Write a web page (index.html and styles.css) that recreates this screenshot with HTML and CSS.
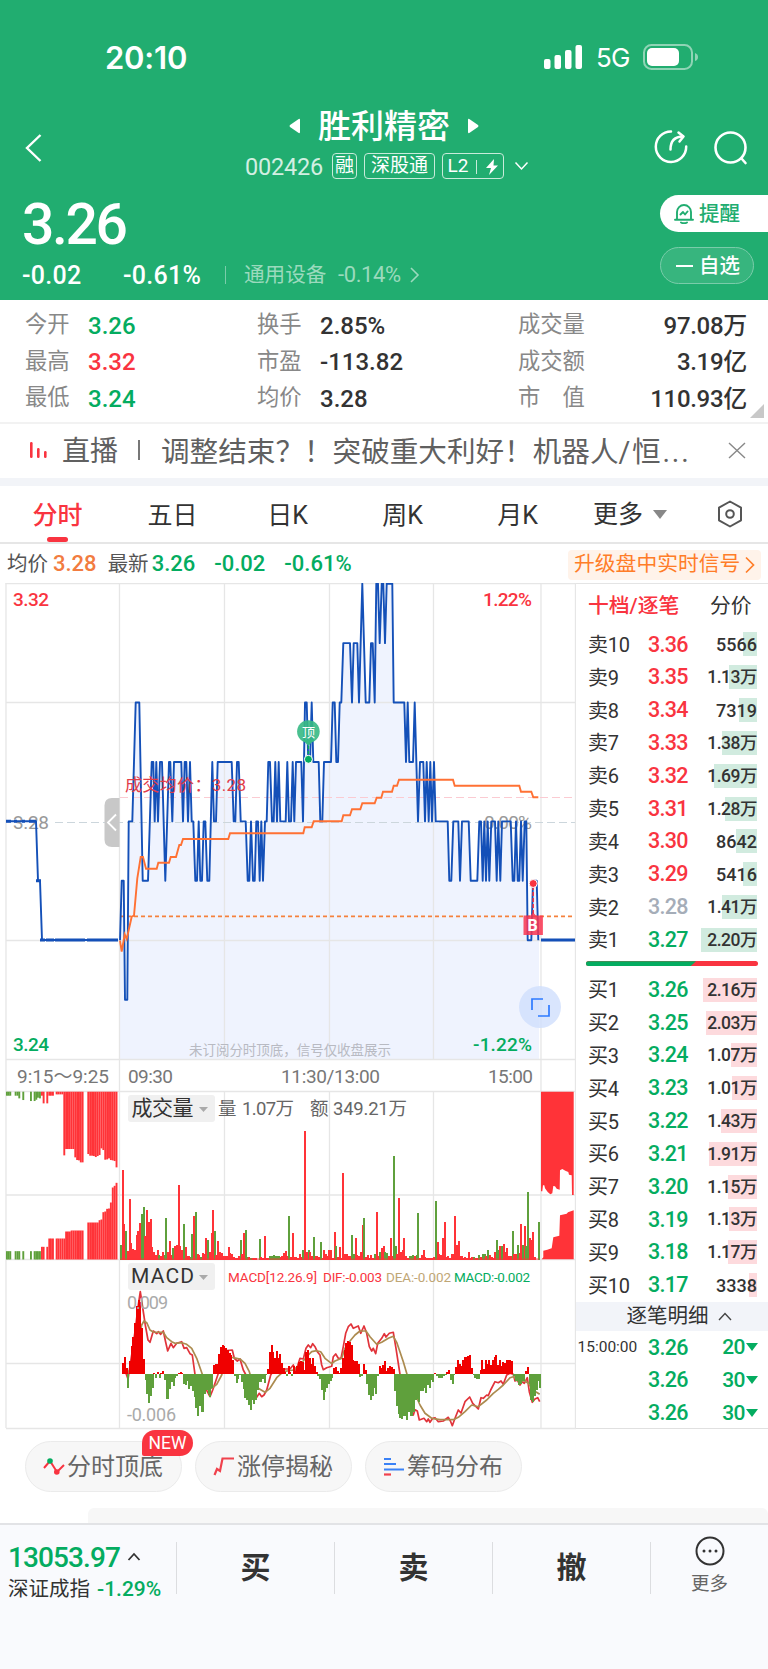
FILE: index.html
```html
<!DOCTYPE html>
<html lang="zh-CN">
  <head>
    <meta charset="UTF-8" />
    <meta name="viewport" content="width=device-width, initial-scale=1.0" />
    <title>胜利精密 002426</title>
    <link rel="stylesheet" href="styles.css" />
  </head>
  <body>
    <!-- 顶部绿色区域 -->
    <header class="header">
      <div class="status-bar">
        <span class="clock">20:10</span>
        <svg class="signal" width="39" height="26" viewBox="0 0 39 26" fill="#fff">
          <rect x="0" y="15" width="6.5" height="10" rx="2" />
          <rect x="10.5" y="11" width="6.5" height="14" rx="2" />
          <rect x="21" y="6" width="6.5" height="19" rx="2" />
          <rect x="31.5" y="1" width="6.5" height="24" rx="2" />
        </svg>
        <span class="network">5G</span>
        <svg class="battery" width="55" height="26" viewBox="0 0 55 26">
          <rect x="1" y="1" width="48" height="24" rx="7.5" fill="none" stroke="#8fd4b5" stroke-width="2" />
          <rect x="4" y="4" width="32" height="18" rx="5" fill="#fff" />
          <path d="M52 9q3 1 3 4t-3 4z" fill="#8fd4b5" />
        </svg>
      </div>

      <div class="nav">
        <svg class="back" width="18" height="28" viewBox="0 0 18 28" fill="none" stroke="#fff" stroke-width="2.4">
          <path d="M15.500 1L2 14l13.500 13" />
        </svg>
        <div class="stock">
          <div class="stock-name">
            <svg width="12" height="16" viewBox="0 0 12 16" fill="#fff"><path d="M11 2v12q0 2-2 .5L1 9q-1-1 0-2L9 1.500Q11 0 11 2z" /></svg>
            <h1>胜利精密</h1>
            <svg width="12" height="16" viewBox="0 0 12 16" fill="#fff"><path d="M1 2v12q0 2 2 .5L11 9q1-1 0-2L3 1.500Q1 0 1 2z" /></svg>
          </div>
          <div class="stock-sub">
            <span class="code">002426</span>
            <span class="tag tag-rong">融</span>
            <span class="tag tag-sgt">深股通</span>
            <span class="tag tag-l2">L2<i></i>
              <svg width="12" height="16" viewBox="0 0 12 16" fill="#fff"><path d="M8 0L0 9h5l-2 7 9-9.500H7.500z" /></svg>
            </span>
            <svg class="sub-arrow" width="15" height="10" viewBox="0 0 15 10" fill="none" stroke="#fff" stroke-width="1.500"><path d="M1.500 1.500l6 6.500 6-6.500" /></svg>
          </div>
        </div>
        <svg class="share" width="36" height="36" viewBox="0 0 36 36" fill="none" stroke="#fff" stroke-width="2.500" stroke-linecap="round" stroke-linejoin="round">
          <path d="M18 2.500A15.200 15.200 0 1 0 33.200 17.500" />
          <path d="M17.500 20.500c0-9 4-13 12.500-13" />
          <path d="M25.500 3.500l5 4-4 5" />
        </svg>
        <svg class="search" width="36" height="36" viewBox="0 0 36 36" fill="none" stroke="#fff" stroke-width="2.600" stroke-linecap="round">
          <circle cx="17.500" cy="17.500" r="15" />
          <path d="M28.500 28.500l4 4.500" />
        </svg>
      </div>

      <div class="quote">
        <div class="quote-left">
          <div class="price">3.26</div>
          <div class="change">
            <span class="chg">-0.02</span>
            <span class="pct">-0.61%</span>
            <i></i>
            <span class="industry">通用设备</span>
            <span class="industry-pct">-0.14%</span>
            <svg width="10" height="16" viewBox="0 0 10 16" fill="none" stroke="#9bdabd" stroke-width="1.600"><path d="M1 1l7 7-7 7" /></svg>
          </div>
        </div>
        <div class="quote-right">
          <div class="remind">
            <svg width="20" height="21" viewBox="0 0 20 21" fill="none" stroke="#21ad70" stroke-width="1.900" stroke-linejoin="round" stroke-linecap="round">
              <path d="M3 16.500V9a7 7 0 0 1 14 0v7.500M1 16.800h18M7 19.500q3 1.500 6 0M6.500 11.500l2.500-2.500 2 2.500 2.500-3" />
            </svg>
            <span>提醒</span>
          </div>
          <div class="favor"><i></i><span>自选</span></div>
        </div>
      </div>
    </header>

    <!-- 行情数据 -->
    <section class="stats">
      <div class="stat"><label>今开</label><b class="green">3.26</b></div>
      <div class="stat"><label>换手</label><b>2.85%</b></div>
      <div class="stat wide"><label>成交量</label><b>97.08万</b></div>
      <div class="stat"><label>最高</label><b class="red">3.32</b></div>
      <div class="stat"><label>市盈</label><b>-113.82</b></div>
      <div class="stat wide"><label>成交额</label><b>3.19亿</b></div>
      <div class="stat"><label>最低</label><b class="green">3.24</b></div>
      <div class="stat"><label>均价</label><b>3.28</b></div>
      <div class="stat wide"><label>市　值</label><b>110.93亿</b></div>
      <span class="corner"></span>
    </section>

    <!-- 直播 -->
    <section class="live">
      <svg width="20" height="18" viewBox="0 0 20 18" fill="#f93440">
        <rect x="1" y="1" width="2.600" height="16" rx="1.200" />
        <rect x="8" y="7" width="2.600" height="10" rx="1.200" />
        <rect x="15" y="10" width="2.600" height="7" rx="1.200" />
      </svg>
      <span class="live-label">直播</span>
      <i></i>
      <span class="live-title">调整结束？！突破重大利好！机器人<span>/恒...</span></span>
      <svg width="18" height="17" viewBox="0 0 18 17" fill="none" stroke="#888" stroke-width="1.400"><path d="M1 1l16 15M17 1L1 16" /></svg>
    </section>

    <!-- 周期切换 -->
    <nav class="tabs">
      <span class="tab active">分时</span>
      <span class="tab">五日</span>
      <span class="tab">日K</span>
      <span class="tab">周K</span>
      <span class="tab">月K</span>
      <span class="tab more">更多<i></i></span>
      <svg width="28" height="28" viewBox="0 0 28 28" fill="none" stroke="#555" stroke-width="2" stroke-linejoin="round">
        <path d="M14 1.500l11 6.200v12.600L14 26.500 3 20.300V7.700z" />
        <circle cx="14" cy="14" r="3.800" />
      </svg>
    </nav>

    <div class="info">
      <span class="info-label">均价</span><b class="orange">3.28</b>
      <span class="info-label second">最新</span><b class="green">3.26</b>
      <b class="green gap">-0.02</b><b class="green gap">-0.61%</b>
      <a class="upgrade">升级盘中实时信号
        <svg width="10" height="18" viewBox="0 0 10 18" fill="none" stroke="#ff7d28" stroke-width="1.700"><path d="M1 1.500L8.500 9 1 16.500" /></svg>
      </a>
    </div>

    <main class="board">
      <!-- 分时图、成交量、MACD -->
      <svg class="chart" width="576" height="847" viewBox="0 583 576 847">
        <g id="area"></g>
        <g class="grid">
          <path d="M5.500 583.500H576M6 702.500H575M6 940.500H575M6 1059.500H575M6 1091.500H575M6 1195H575M6 1259.500H575M6 1363.500H575M6 1428.500H576" />
          <path d="M6 583V1428M119.500 583V1428M224.500 583V1059M224.500 1091V1428M329.500 583V1059M329.500 1091V1428M433.500 583V1059M433.500 1091V1428M541 583V1428M575.500 583V1428" />
        </g>
        <path class="dash-gray" d="M55 822.500H575" />
        <path class="dash-pink" d="M120 797.500H575" />
        <path class="dash-orange" d="M120 916.300H575" />
        <text class="axis gray" x="13" y="829" textLength="36">3.28</text>
        <text class="axis gray" x="484" y="829" textLength="48">0.00%</text>
        <g id="lines"></g>
        <text class="avg-note" x="125" y="791" textLength="121">成交均价：3.28</text>
        <text class="axis red" x="13" y="606" textLength="36">3.32</text>
        <text class="axis red" x="483" y="606" textLength="49">1.22%</text>
        <text class="axis green" x="13" y="1051" textLength="36">3.24</text>
        <text class="axis green" x="473" y="1051" textLength="59">-1.22%</text>
        <text class="hint" x="189" y="1055" textLength="202">未订阅分时顶底，信号仅收盘展示</text>

        <!-- 左侧收起按钮 -->
        <path d="M119.500 798H112q-7.500 0-7.500 7.500v34q0 7.500 7.500 7.500h7.500z" fill="#c8c8c8" />
        <path d="M116 814.500l-8 8 8 8" fill="none" stroke="#fff" stroke-width="1.800" />

        <!-- 顶 -->
        <path d="M308.400 741v14" stroke="#04ac60" stroke-width="1.500" stroke-dasharray="3 2" />
        <path d="M303 740l5.400 6 5.400-6z" fill="#36b984" />
        <circle cx="308.400" cy="731.500" r="11.300" fill="#36b984" fill-opacity="0.900" />
        <text class="top-mark" x="302" y="737">顶</text>
        <circle cx="308.400" cy="759.300" r="4" fill="#04ac60" stroke="#fff" />

        <!-- 买点 -->
        <path d="M533.200 886v30" stroke="#f93440" stroke-width="1.500" stroke-dasharray="4 2" />
        <circle cx="533.200" cy="883.500" r="4" fill="#f93440" stroke="#fff" />
        <path d="M523.500 915.500h7l2.700-3 2.700 3h7V935h-19.400z" fill="#f93450" fill-opacity="0.850" />
        <text class="buy-mark" x="527.500" y="931">B</text>

        <!-- 全屏 -->
        <circle cx="540" cy="1007" r="21" fill="#cfdefd" fill-opacity="0.800" />
        <path d="M532 1010v-11h11M538 1016h11v-11" fill="none" stroke="#2e7bff" stroke-width="1.700" />

        <text class="time" x="17" y="1083" textLength="92">9:15～9:25</text>
        <text class="time" x="128" y="1083" textLength="45">09:30</text>
        <text class="time" x="281" y="1083" textLength="99">11:30/13:00</text>
        <text class="time" x="488" y="1083" textLength="45">15:00</text>

        <g id="volume"></g>
        <rect x="128" y="1095" width="87" height="27" rx="3" fill="#f0f0f0" />
        <text class="picker" x="131.500" y="1115" textLength="62">成交量</text>
        <path d="M199 1107h9l-4.500 5z" fill="#aaa" />
        <text class="vol-text" x="218" y="1115">量</text>
        <text class="vol-text" x="242" y="1115" textLength="52">1.07万</text>
        <text class="vol-text" x="310" y="1115">额</text>
        <text class="vol-text" x="333" y="1115" textLength="74">349.21万</text>

        <g id="macd"></g>
        <text class="scale" x="127" y="1309" textLength="41">0.009</text>
        <text class="scale" x="127" y="1421" textLength="49">-0.006</text>
        <rect x="128" y="1263" width="87" height="27" rx="3" fill="#f0f0f0" />
        <text class="picker" x="131" y="1283" textLength="63">MACD</text>
        <path d="M199 1275h9l-4.500 5z" fill="#aaa" />
        <text class="macd-text red" x="228" y="1281.500" textLength="89">MACD[12.26.9]</text>
        <text class="macd-text red" x="323" y="1281.500" textLength="59">DIF:-0.003</text>
        <text class="macd-text tan" x="386" y="1281.500" textLength="65">DEA:-0.002</text>
        <text class="macd-text green" x="454" y="1281.500" textLength="76">MACD:-0.002</text>
      </svg>

      <!-- 盘口 -->
      <aside class="depth">
        <div class="depth-head"><b>十档/逐笔</b><span>分价</span></div>
        <div id="asks"></div>
        <div class="ratio"><i></i></div>
        <div id="bids"></div>
        <div class="ticks-head">逐笔明细
          <svg width="14" height="9" viewBox="0 0 14 9" fill="none" stroke="#444" stroke-width="1.400"><path d="M1 8l6-6.500L13 8" /></svg>
        </div>
        <div class="row"><span class="tick-time">15:00:00</span><b class="green">3.26</b><span class="tick-num">20<i></i></span></div>
        <div class="row"><span class="tick-time"></span><b class="green">3.26</b><span class="tick-num">30<i></i></span></div>
        <div class="row"><span class="tick-time"></span><b class="green">3.26</b><span class="tick-num">30<i></i></span></div>
      </aside>
    </main>

    <section class="tools">
      <div class="tool">
        <svg width="22" height="19" viewBox="0 0 22 19" fill="none" stroke="#f93440" stroke-width="2">
          <path d="M1 11l6-7 7 11 7-7" />
          <circle cx="7" cy="4" r="2.800" fill="#04ac60" stroke="none" />
          <circle cx="13.800" cy="15" r="2.800" fill="#f93440" stroke="none" />
        </svg>
        <span>分时顶底</span>
        <em>NEW</em>
      </div>
      <div class="tool">
        <svg width="22" height="19" viewBox="0 0 22 19" fill="none" stroke="#f0424d" stroke-width="2.200">
          <path d="M1.500 18l2.500-6 3 2 2.500-12.500H21" />
        </svg>
        <span>涨停揭秘</span>
      </div>
      <div class="tool">
        <svg width="22" height="19" viewBox="0 0 22 19">
          <path d="M1 2h7M1 7h12M1 12.500h20" stroke="#3b82f6" stroke-width="2.200" />
          <path d="M1 17.500h7" stroke="#f0424d" stroke-width="2.200" />
        </svg>
        <span>筹码分布</span>
      </div>
    </section>
    <div class="sheet"></div>

    <footer class="footer">
      <div class="index">
        <div class="index-value">13053.97
          <svg width="14" height="9" viewBox="0 0 14 9" fill="none" stroke="#333" stroke-width="1.800"><path d="M1.500 8L7 2l5.500 6" /></svg>
        </div>
        <div class="index-name">深证成指 <span>-1.29%</span></div>
      </div>
      <div class="action">买</div>
      <div class="action">卖</div>
      <div class="action">撤</div>
      <div class="footer-more">
        <svg width="30" height="30" viewBox="0 0 30 30">
          <circle cx="15" cy="15" r="13.500" fill="none" stroke="#333" stroke-width="2" />
          <g fill="#333"><circle cx="9" cy="15" r="1.500" /><circle cx="15" cy="15" r="1.500" /><circle cx="21" cy="15" r="1.500" /></g>
        </svg>
        更多
      </div>
    </footer>

    <script src="script.js"></script>
  </body>
</html>
```
FILE: styles.css
```css
* {
  box-sizing: border-box;
}

body {
  margin: 0;
  width: 768px;
  height: 1669px;
  overflow: hidden;
  background: #fff;
  color: #333;
  font-family: Roboto, "Noto Sans CJK SC", sans-serif;
  line-height: 1.2;
}

b {
  font-weight: 500;
}

i,
em {
  font-style: normal;
}

svg {
  display: block;
  flex: none;
}

.green {
  color: #04ac60;
  fill: #04ac60;
}

.red {
  color: #f93440;
  fill: #f93440;
}

.orange {
  color: #f27c40;
}

.flat {
  color: #a5adb8;
}

/* 顶部 */
.header {
  height: 300px;
  background: #21ad70;
  color: #fff;
}

.status-bar {
  display: flex;
  align-items: center;
  height: 104px;
  padding: 10px 70px 0 105px;
}

.clock {
  flex: 1;
  font: 600 31px Inter, sans-serif;
  letter-spacing: -0.2px;
}

.network {
  width: 47px;
  padding-left: 13px;
  font: 400 26px Inter, sans-serif;
  letter-spacing: -0.8px;
}

.battery {
  margin-left: 13px;
}

.nav {
  display: flex;
  align-items: flex-start;
  height: 80px;
  padding: 0 19px 0 25px;
}

.back {
  margin-top: 30px;
}

.stock {
  width: 300px;
  margin: 4px 108px 0 202px;
}

.stock-name {
  display: flex;
  align-items: center;
  height: 36px;
  padding-left: 44px;
}

.stock-name h1 {
  width: 132px;
  margin: 1px 17px 0;
  font-size: 33px;
  font-weight: 500;
  line-height: 36px;
  white-space: nowrap;
}

.stock-sub {
  display: flex;
  align-items: center;
  height: 26px;
  margin-top: 9px;
}

.code {
  width: 87px;
  padding-top: 2px;
  color: #d3efe2;
  font-size: 23.500px;
  letter-spacing: -0.2px;
}

.tag {
  display: flex;
  align-items: center;
  justify-content: center;
  height: 26px;
  margin-right: 7px;
  padding-top: 1px;
  border: 1px solid #c8ebda;
  border-radius: 4px;
  font-size: 19px;
}

.tag-rong {
  width: 25px;
}

.tag-sgt {
  width: 71px;
}

.tag-l2 {
  width: 62px;
}

.tag-l2 i {
  width: 1px;
  height: 14px;
  margin: 0 9px 0 8px;
  background: #c8ebda;
}

.sub-arrow {
  margin-left: 3px;
}

.share {
  margin: 25px 24px 0 0;
}

.search {
  margin-top: 26px;
}

.quote {
  display: flex;
  justify-content: space-between;
  height: 116px;
}

.quote-left {
  padding: 9px 0 0 22px;
}

.price {
  height: 63px;
  font-size: 57px;
  font-weight: 500;
  line-height: 64px;
  letter-spacing: -2.400px;
}

.change {
  display: flex;
  align-items: center;
  height: 38px;
}

.chg,
.pct {
  width: 101px;
  padding-top: 1px;
  font-size: 25px;
  font-weight: 500;
  letter-spacing: 0.3px;
}

.pct {
  width: 102px;
}

.change i {
  width: 1px;
  height: 18px;
  margin-right: 18px;
  background: #7accaa;
}

.industry,
.industry-pct {
  color: #9bdabd;
  font-size: 20.600px;
}

.industry {
  width: 94px;
}

.industry-pct {
  width: 72px;
  font-size: 22px;
  letter-spacing: -0.4px;
}

.quote-right {
  width: 108px;
  padding-top: 11px;
}

.remind {
  display: flex;
  align-items: center;
  height: 37px;
  padding-left: 14px;
  border-radius: 19px 0 0 19px;
  background: #fff;
  color: #21ad70;
  font-size: 20.500px;
  font-weight: 500;
}

.remind svg {
  margin-right: 5px;
}

.remind span,
.favor span {
  padding-top: 2px;
}

.favor {
  display: flex;
  align-items: center;
  width: 94px;
  height: 37px;
  margin-top: 15px;
  padding-left: 15px;
  border: 1px solid #7accaa;
  border-radius: 19px;
  background: #37b57e;
  font-size: 20.500px;
  font-weight: 500;
}

.favor i {
  width: 17px;
  height: 2px;
  margin-right: 6px;
  background: #fff;
}

/* 行情数据 */
.stats {
  position: relative;
  display: grid;
  grid-template-columns: 232px 261px 229px;
  grid-auto-rows: 36.700px;
  height: 124px;
  padding: 7px 0 0 25px;
  border-bottom: 2px solid #f2f2f2;
}

.stat {
  display: flex;
  align-items: center;
  height: 37px;
}

.stat label {
  width: 63px;
  color: #888;
  font-size: 22.300px;
  line-height: 34px;
  padding-bottom: 3px;
}

.stat b {
  font-size: 24px;
  line-height: 36px;
}

.stat.wide {
  justify-content: space-between;
}

.stat.wide label {
  width: 70px;
}

.stat.wide b {
  letter-spacing: -0.3px;
}

.corner {
  position: absolute;
  right: 4px;
  bottom: 4px;
  border-left: 14px solid transparent;
  border-bottom: 14px solid #c8c8c8;
}

.live {
  display: flex;
  align-items: center;
  height: 62px;
  padding: 0 22px 2px 29px;
  border-bottom: 8px solid #f2f4f8;
  color: #606060;
  font-size: 28.600px;
  white-space: nowrap;
}

.live-label {
  width: 76px;
  margin-left: 13px;
  padding-top: 4px;
  font-size: 28px;
}

.live i {
  width: 2px;
  height: 20px;
  margin-right: 21px;
  background: #777;
}

.live-title {
  flex: 1;
  padding-top: 4px;
}

.live-title span {
  letter-spacing: 1.800px;
}

/* 周期 */
.tabs {
  display: grid;
  grid-template-columns: 115px 115px 115px 115px 115px 130px 28px;
  align-items: center;
  height: 58px;
  border-bottom: 2px solid #e6e6e6;
  font-size: 25px;
}

.tab {
  position: relative;
  height: 56px;
  line-height: 59px;
  text-align: center;
}

.tab.active {
  color: #f93440;
  font-weight: 500;
}

.tab.active::after {
  position: absolute;
  bottom: 0;
  left: 47px;
  width: 21px;
  height: 5px;
  border-radius: 3px;
  background: #f93440;
  content: "";
}

.more {
  display: flex;
  align-items: center;
  padding-left: 18px;
}

.more i {
  margin-left: 10px;
  border: 7px solid transparent;
  border-top: 9px solid #888;
  border-bottom: 0;
}

.tabs svg {
  margin-left: 11px;
}

.info {
  display: flex;
  align-items: center;
  height: 40px;
  padding: 1px 7px 0 7px;
  font-size: 20.500px;
  white-space: nowrap;
}

.info b {
  font-size: 22px;
}

.info-label {
  width: 46px;
  color: #555;
}

.info .second {
  margin-left: 11px;
  width: 44px;
}

.info .gap {
  margin-left: 19px;
}

.upgrade {
  display: flex;
  align-items: center;
  width: 193px;
  height: 30px;
  margin-left: auto;
  padding-left: 6px;
  border-radius: 4px;
  background: #fff3ea;
  color: #ff7d28;
  font-size: 20.800px;
}

.upgrade svg {
  margin-left: 5px;
}

/* 图表 */
.board {
  display: flex;
  height: 847px;
  margin-top: -1px;
}

.chart text {
  font-size: 19px;
}

.grid {
  fill: none;
  stroke: #e6e6e6;
  stroke-width: 1.300;
}

.dash-gray,
.dash-pink,
.dash-orange {
  fill: none;
  stroke: #ccd6dc;
  stroke-width: 1.200;
  stroke-dasharray: 8 4;
}

.dash-pink {
  stroke: #fbcbd2;
}

.dash-orange {
  stroke: #f5813c;
  stroke-width: 1.800;
  stroke-dasharray: 4 3;
}

.chart .axis {
  font-weight: 500;
}

.chart .gray {
  fill: #999;
  font-weight: 400;
}

.chart .avg-note {
  fill: #e23c48;
  font-size: 17px;
}

.chart .hint {
  fill: #b8bac2;
  font-size: 13.500px;
}

.chart .top-mark {
  fill: #fff;
  font-size: 13px;
}

.chart .buy-mark {
  fill: #fff;
  font-size: 16px;
  font-weight: 700;
}

.chart .time {
  fill: #777;
}

.chart .picker {
  fill: #333;
  font-size: 21px;
}

.chart .vol-text {
  fill: #666;
  font-size: 18.500px;
}

.chart .scale {
  fill: #aaa;
  font-size: 18px;
}

.chart .macd-text {
  font-size: 13.500px;
}

.chart .tan {
  fill: #bfa675;
}

.price-line {
  fill: none;
  stroke: #1450b8;
  stroke-width: 1.900;
  stroke-linejoin: round;
}

.auction-line {
  fill: none;
  stroke: #1450b8;
  stroke-width: 3;
}

.avg-line {
  fill: none;
  stroke: #ff7134;
  stroke-width: 1.900;
}

.bars {
  shape-rendering: crispEdges;
}

.dif-line,
.dea-line {
  fill: none;
  stroke: #e1333a;
  stroke-width: 1.700;
  stroke-linejoin: round;
}

.dea-line {
  stroke: #ac8b4f;
}

/* 盘口 */
.depth {
  width: 192px;
  height: 846px;
  border-top: 1px solid #e4e4e4;
  border-bottom: 1px solid #e0e0e0;
}

.depth-head {
  display: flex;
  align-items: center;
  height: 44px;
  padding-left: 12px;
  font-size: 20.800px;
}

.depth-head b {
  width: 122px;
  color: #f93440;
}

.row {
  display: flex;
  align-items: center;
  height: 32.830px;
  padding: 0 11px 0 12px;
  font-size: 20px;
}

.row b {
  width: 40px;
  font-size: 21.500px;
  letter-spacing: -0.7px;
}

.row .name {
  width: 60px;
  padding-top: 1px;
  letter-spacing: -0.2px;
}

.row .vol {
  flex: 1;
  height: 24px;
  font-size: 18px;
  font-weight: 500;
  line-height: 25px;
  text-align: right;
  white-space: nowrap;
  background: linear-gradient(#d1ebdf, #d1ebdf) no-repeat right;
  background-size: var(--w) 100%;
}

.row .vol.wan {
  font-size: 17.500px;
  letter-spacing: -0.5px;
}

.row .vol.bid {
  background-image: linear-gradient(#fddadd, #fddadd);
}

.ratio {
  height: 5px;
  margin: 5px 10px 7px 10px;
  border-radius: 3px;
  background: #f93440;
  overflow: hidden;
}

.ratio i {
  display: block;
  width: 110px;
  height: 5px;
  background: #04ac60;
  clip-path: polygon(0 0, 100% 0, 95% 100%, 0 100%);
}

.ticks-head {
  display: flex;
  align-items: center;
  justify-content: center;
  height: 29.500px;
  padding-left: 14px;
  background: #f2f4f9;
  font-size: 20.500px;
}

.ticks-head svg {
  margin-left: 9px;
}

.tick-time {
  width: 70.500px;
  margin-left: -10.500px;
  font-size: 15.500px;
}

.tick-num {
  display: flex;
  flex: 1;
  align-items: center;
  justify-content: flex-end;
  margin-right: -1px;
  color: #04ac60;
  font-size: 21px;
  font-weight: 500;
  letter-spacing: -0.5px;
}

.tick-num i {
  margin-left: 1px;
  border: 6.500px solid transparent;
  border-top: 8px solid #04ac60;
  border-bottom: 0;
}

/* 工具按钮 */
.tools {
  display: flex;
  gap: 13px;
  height: 78px;
  padding: 11px 0 0 25px;
}

.tool {
  position: relative;
  display: flex;
  align-items: center;
  width: 157px;
  height: 51px;
  padding-left: 17px;
  border: 1px solid #ebebeb;
  border-radius: 26px;
  background: #f7f7f7;
  color: #666;
  font-size: 24px;
  white-space: nowrap;
}

.tool svg {
  margin-right: 2px;
}

.tool span {
  padding-top: 2px;
}

.tool em {
  position: absolute;
  top: -12px;
  left: 116px;
  width: 51px;
  height: 26px;
  border-radius: 13px 13px 13px 2px;
  background: #f93440;
  color: #fff;
  font-size: 17.500px;
  line-height: 27px;
  text-align: center;
}

.sheet {
  height: 15px;
  margin-left: 88px;
  border-radius: 6px 6px 0 0;
  background: #f7f7f7;
}

/* 底部 */
.footer {
  display: flex;
  height: 146px;
  padding-top: 17px;
  border-top: 2px solid #e2e3e6;
  background: #f9fafd;
}

.index {
  width: 176px;
  padding-left: 8px;
}

.index-value {
  display: flex;
  align-items: center;
  height: 31px;
  color: #04ac60;
  font-size: 28px;
  font-weight: 500;
  letter-spacing: -0.9px;
}

.index-value svg {
  margin: -2px 0 0 7px;
}

.index-name {
  display: flex;
  height: 30px;
  font-size: 20.500px;
  line-height: 32px;
  white-space: nowrap;
}

.index-name span {
  margin-left: 7px;
  color: #04ac60;
  font-size: 21px;
  font-weight: 500;
}

.action {
  width: 158px;
  height: 52px;
  border-left: 1px solid #dcdde0;
  font-size: 30px;
  font-weight: 700;
  line-height: 52px;
  text-align: center;
}

.footer-more {
  display: flex;
  flex: 1;
  flex-direction: column;
  align-items: center;
  height: 52px;
  border-left: 1px solid #dcdde0;
  color: #666;
  font-size: 18.500px;
  line-height: 37px;
}

.footer-more svg {
  margin-top: -6px;
}
```
FILE: script.js
```js
const RED = "#ff3338";
const GREEN = "#5fa03c";

// 分时价格：[x, 分]，x 为三倍像素
const prices = `360,26 365,27 371,27 375,25 382,25 386,28 397,28 407,30 418,30 428,27 444,27 455,29 460,29 464,28 469,29
474,28 480,29 486,29 496,27 507,29 511,29 517,28 522,29 544,29 549,28 554,29 559,29 564,28 570,29 575,28 580,28 586,27
591,27 596,28 601,27 606,27 611,28 616,28 622,27 628,27 637,29 642,28 648,28 653,29 695,29 701,28 706,28 711,29 716,29
722,28 737,28 743,27 748,27 753,28 759,27 764,27 769,28 774,28 779,27 784,28 789,27 795,28 800,28 805,29 810,29 816,28
821,28 826,29 831,28 836,29 841,28 857,28 862,29 867,28 873,28 878,29 883,28 888,29 904,29 909,28 915,30 920,30 925,29
930,29 935,30 940,29 956,29 961,28 967,28 972,29 993,29 998,30 1004,30 1009,29 1014,29 1019,30 1024,30 1030,31 1050,31
1056,30 1061,31 1072,31 1077,30 1087,32 1097,30 1108,30 1113,31 1118,31 1124,30 1129,32 1134,32 1139,31 1145,32 1150,32
1155,31 1160,32 1177,32 1181,30 1213,30 1218,29 1223,30 1228,29 1239,29 1244,30 1254,28 1260,29 1270,29 1275,28 1280,29
1286,28 1291,29 1296,28 1302,29 1307,28 1343,28 1348,27 1354,27 1360,28 1375,28 1380,27 1386,28 1406,28 1412,27 1432,27
1438,28 1443,28 1448,27 1453,28 1458,27 1463,28 1468,27 1474,28 1485,28 1490,27 1495,28 1501,27 1506,28 1532,28 1538,27
1543,27 1548,28 1553,27 1558,27 1563,28 1568,27 1574,28 1579,28 1583,26 1594,26 1599,27 1610,27 1615,26`;

const average = `360,1097 365,1130 374,1078 380,1092 395,1025 402,1022 412,910 422,846 429,846 438,881 470,881 475,863
507,863 512,846 528,846 538,810 543,810 549,792 685,792 690,775 910,775 914,757 935,757 941,739 1025,739 1030,721
1050,721 1056,703 1081,703 1087,685 1124,685 1130,668 1144,668 1149,650 1176,650 1181,632 1191,632 1197,614 1359,614
1364,632 1558,632 1563,650 1594,650 1600,667 1615,667`;

// 成交量：起点 x 和每分钟高度，g 表示绿柱
const volumes = [
  [362, "45g 270 108 87g 27 183 50 33 28 73 87 110 137g 158g 70 148 112 122 38 22 15 28 14g 12 22 13g 124g 22 57 14 36g 40 45 225 42 30 108g 37 12 10 8g 76g 132 144g 18 15 8g 20 18 66 60g 22 80 150 87g"],
  [648, "14 55 22 20 12 12 10 38 20 18 8 6 5 10 58g 18 80 90g 8g 7 5g 6 5 5"],
  [778, "62g 8 5 70 5 5 10g 12g 14g 12g 12g 12g"],
  [841, "8 10 20 26 10 132g 8 81 8 8 6 18 8 28g 387 22 28g 24 10 68g 12 10 8 52g 5 30 16 10 28 28 5 82 40g 8 38 5 260 18 16 12 10 75g 18g 64 14 10 24 104 126g 8 14 6 14 6 18g 142 12 22g 34 42 22g 20g 12 64 12"],
  [1181, "312g 40g 16 184 24 28 66 10 5 10g 12g 14g 12 14g 140g 6 14 28 8 5 6 6 5 8 177g 54 16 14 64 114 8 12 5 16 16 132 44 56 10 10 5 8 6 24 6 8 8g 6 4 14g 8 16g 16g 10 28g 14 8 6 22 60g 30g 40 40g 46 22 36 10 10 85g 16 18 44g 20 108 44g 100 42g 204g 66 60 84 8 0 112g"],
];

// MACD 柱
const macdBars = [
  [369, "33 53 20 -42 40 85 112 155 205 222 218 140 46 -18 -60 -86 -66 -40 5 -12 6 -12 4 10 -18 -74 -74 -44 -22 -34 -12 -4 4 6 4 -30 -32 -20 -44 -36 -50 -68 -100 -126 -96 -112 -112 -60 -48 -60 -68 -40 28 30 30 60 82 87 84 80 72 64 58 44 -4 -26 -14 -2 -24 -44 -70 -76 -92 -106 -76 -90 -76 -46 -24 -24 -14 -26 -2 16 66 87 66 50 70 48"],
  [840, "62 35 18 6 -4 26 8 -4 26 10 24 36 40 38 14 68 74 50 32 50 24 6 -6 -14 -46 -78 -52 -42 -30 -20 -10 20 22 10 4 20 48 74 94 100 98 88 42 40 40 30 -8 -4 30 14 -28 -62 -78 -64 -40 -60 -6 24 20 28 40 10 20 24 22 16"],
  [1185, "-50 -95 -120 -130 -134 -126 -126 -138 -114 -124 -124 -114 -76 -74 -84 -50 -50 -40 -56 -32 -42 -18 -24 5 -6 -12 -12 -10 -4 -2 8 12 -16 -28 -2 22 42 30 24 42 52 52 56 58 20 -2 -10 -14 -14 14 42 16 42 30 42 28 44 52 58 28 42 26 38 34 42 44 42 40 -6 -20 -20 -32 -30 -20 -20 10 22 -30 -76 -84 -66 -46 -20 -42"],
];

const dif = `369,330 384,372 395,300 405,230 415,150 421,110 427,150 436,210 444,255 450,262 460,228 470,236 475,230 482,238
490,228 497,262 503,288 513,265 520,278 530,265 545,260 552,280 560,278 570,296 577,300 585,358 600,400 614,395 630,425
638,405 650,370 660,340 680,287 697,285 703,310 712,318 720,312 730,345 738,360 755,420 768,430 778,415 785,425 792,420
800,405 812,360 825,340 845,350 855,342 870,342 880,330 888,348 900,310 910,312 918,280 925,270 932,278 938,266 945,275
952,290 960,300 965,330 970,344 980,338 995,334 1000,305 1007,297 1015,310 1023,310 1030,275 1037,235 1045,215 1053,207
1060,220 1075,213 1082,235 1092,213 1100,235 1108,275 1115,288 1120,280 1127,296 1133,265 1145,250 1153,236 1158,246
1168,235 1180,232 1188,280 1200,358 1220,440 1240,480 1245,464 1252,468 1258,495 1272,490 1280,500 1285,492 1290,502
1298,490 1305,488 1315,500 1330,498 1345,487 1352,500 1357,512 1365,490 1375,465 1383,474 1395,440 1409,426 1418,445
1435,462 1443,428 1450,430 1460,420 1465,422 1472,405 1485,380 1495,383 1503,378 1510,388 1520,360 1530,355 1540,358
1545,378 1552,375 1560,390 1566,380 1573,385 1582,368 1588,410 1597,442 1605,432 1613,428 1619,440`;

const dea = `369,345 390,350 400,320 415,260 425,210 432,198 440,203 450,225 460,231 490,232 500,248 515,260 525,265 545,263
560,268 575,280 590,310 607,358 620,395 635,400 650,388 665,360 675,325 690,305 700,308 720,312 735,325 748,350 760,390
775,400 795,412 810,400 830,368 850,350 880,345 900,330 920,305 935,290 950,287 962,290 975,310 995,326 1005,318
1025,310 1035,280 1050,258 1065,240 1080,228 1098,228 1110,245 1130,268 1145,262 1165,250 1180,244 1190,262 1210,320
1221,358 1240,400 1252,432 1260,450 1275,475 1295,490 1320,494 1360,494 1375,487 1395,470 1415,450 1435,455 1460,435
1480,415 1495,403 1510,390 1530,368 1540,365 1555,378 1575,378 1585,385 1595,400 1607,410 1619,418`;

function parse(text) {
  return text.trim().split(/\s+/).map((p) => p.split(",").map(Number));
}

function line(points, top, cls) {
  const d = points.map(([x, y]) => (x / 3).toFixed(1) + "," + (top + y / 3).toFixed(1)).join(" ");
  return `<polyline class="${cls}" points="${d}" />`;
}

function rect(x, y, w, h, color) {
  return `<rect x="${x.toFixed(2)}" y="${y.toFixed(2)}" width="${w}" height="${h.toFixed(2)}" fill="${color}" />`;
}

function drawPrice() {
  const pts = parse(prices).map(([x, p]) => [x, (32 - p) * 178.3 + 26]);
  const fill = [[360, 1452], ...pts, [1617, 1090], [1617, 1452]];
  document.getElementById("area").innerHTML = line(fill, 575, "area").replace("/>", 'fill="#eff3fe" />');
  document.getElementById("lines").innerHTML =
    line([[18, 739], [108, 739], [114, 917], [120, 917], [126, 1095], [354, 1095]], 575, "price-line") +
    '<path class="auction-line" d="M6 821.300h5M14 821.300h3M22 821.300h3M29 821.300h7M36 880.700h5M40 940h5M46 940h8M55 940h30M87 940h31M541 940h34" />' +
    line(pts, 575, "price-line") +
    line(parse(average), 575, "avg-line");
}

function drawVolume() {
  const base = 1259.5;
  let html = '<g class="bars">';
  volumes.forEach(([start, text]) => {
    text.split(" ").forEach((v, i) => {
      const h = parseInt(v) / 3;
      html += rect((start + i * 5.23 - 2) / 3, base - h, 2, h, v.endsWith("g") ? GREEN : RED);
    });
  });
  html += "</g>";

  // 集合竞价：[x, 上柱, 下柱, 颜色]
  const auction = [];
  [18, 23, 28, 44, 50, 55].forEach((x, i) => auction.push([x, i === 5 ? 20 : 12, 25, GREEN]));
  auction.push([67, 25, 25, GREEN], [90, 28, 25, GREEN], [101, 28, 25, GREEN], [106, 24, 25, GREEN], [111, 18, 25, GREEN], [117, 20, 25, GREEN]);
  auction.push([123, 12, 38, RED], [128, 35, 38, RED], [139, 35, 38, RED], [145, 12, 63, RED], [150, 12, 63, RED], [156, 12, 63, RED]);
  [167, 172, 178, 184].forEach((x) => auction.push([x, 8, 63, RED]));
  [191, 172, 172, 172, 172, 172, 197, 205, 206, 212, 212].forEach((h, i) => auction.push([190 + i * 5.5, h, i < 1 ? 63 : i < 4 ? 84 : 87, RED]));
  const low = [111, 111, 111, 111, 111, 111, 118, 120, 142, 144, 152, 153, 171, 216, 221, 230];
  [187, 192, 192, 193, 196, 193, 190, 170, 175, 204, 203, 200, 205, 206, 208, 227].forEach((h, i) => auction.push([262 + i * 5.65, h, low[i], RED]));
  auction.forEach(([x, up, down, color]) => {
    html += rect(x / 3, 1091.7, 1.9, up / 3, color) + rect(x / 3, base - down / 3, 1.9, down / 3, color);
  });

  // 盘后
  const tail = (points) => `<polygon fill="${RED}" points="${points.map(([x, y]) => (280 + x / 3).toFixed(1) + "," + (1050 + y / 3).toFixed(1)).join(" ")}" />`;
  html += tail([[783, 125], [881, 125], [881, 435], [876, 435], [875, 376], [867, 374], [865, 366], [856, 362], [847, 357], [840, 361], [839, 419], [830, 416], [825, 409], [820, 408], [817, 430], [811, 433], [803, 426], [795, 415], [793, 406], [789, 406], [787, 424], [783, 424]]);
  html += tail([[785, 628], [790, 622], [790, 602], [802, 599], [815, 595], [820, 562], [838, 557], [840, 496], [860, 491], [864, 487], [881, 481], [881, 628]]);
  html += rect(120, 1258.6, 419, 0.9, RED);
  document.getElementById("volume").innerHTML = html;
}

function drawMacd() {
  const zero = 1374.3;
  let html = line(parse(dif), 1255, "dif-line") + line(parse(dea), 1255, "dea-line") + '<g class="bars">';
  macdBars.forEach(([start, text]) => {
    text.split(" ").forEach((v, i) => {
      const h = v / 3;
      html += rect((start + i * 5.245 - 3) / 3, h > 0 ? zero - h : zero, 2, Math.abs(h), h > 0 ? "#f00000" : GREEN);
    });
  });
  document.getElementById("macd").innerHTML = html + "</g>";
}

// 买卖十档
const asks = [
  ["卖10", "3.36", "5566", 14], ["卖9", "3.35", "1.13万", 28], ["卖8", "3.34", "7319", 18], ["卖7", "3.33", "1.38万", 35],
  ["卖6", "3.32", "1.69万", 43], ["卖5", "3.31", "1.28万", 32], ["卖4", "3.30", "8642", 21], ["卖3", "3.29", "5416", 14],
  ["卖2", "3.28", "1.41万", 35], ["卖1", "3.27", "2.20万", 56],
];
const bids = [
  ["买1", "3.26", "2.16万", 54], ["买2", "3.25", "2.03万", 51], ["买3", "3.24", "1.07万", 26], ["买4", "3.23", "1.01万", 25],
  ["买5", "3.22", "1.43万", 36], ["买6", "3.21", "1.91万", 48], ["买7", "3.20", "1.15万", 29], ["买8", "3.19", "1.13万", 28],
  ["买9", "3.18", "1.17万", 29], ["买10", "3.17", "3338", 8],
];

function drawDepth(id, rows, side) {
  document.getElementById(id).innerHTML = rows
    .map(([name, price, vol, w]) => {
      const color = price > "3.28" ? "red" : price < "3.28" ? "green" : "flat";
      const wan = vol.endsWith("万") ? "wan" : "";
      return `<div class="row"><span class="name">${name}</span><b class="${color}">${price}</b><span class="vol ${side} ${wan}" style="--w:${w}px">${vol}</span></div>`;
    })
    .join("");
}

drawPrice();
drawVolume();
drawMacd();
drawDepth("asks", asks, "ask");
drawDepth("bids", bids, "bid");
```
